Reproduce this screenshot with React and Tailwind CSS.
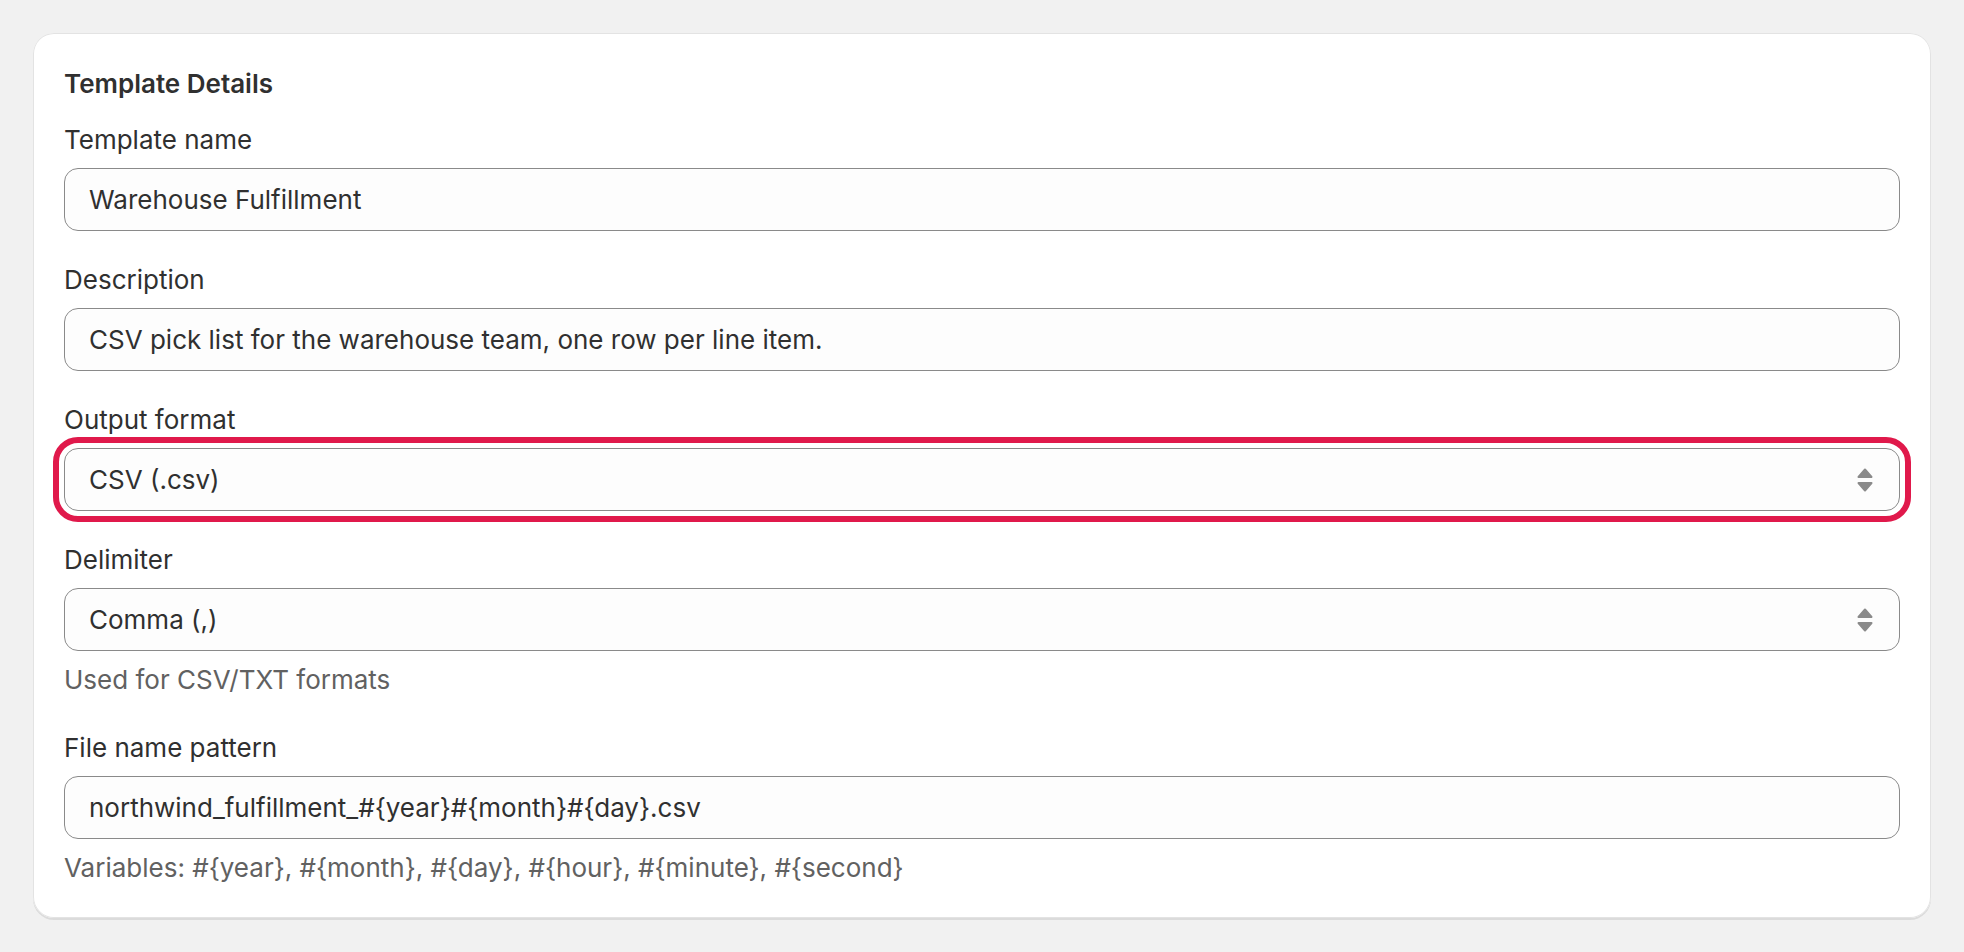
import React from "react";

function SelectArrows() {
  return (
    <svg viewBox="0 0 16 24" className="w-[16px] h-[24px] shrink-0" aria-hidden="true">
      <g fill="#8a8a8a" stroke="#8a8a8a" strokeWidth="2" strokeLinejoin="round">
        <polygon points="8,1.5 14.5,9 1.5,9" />
        <polygon points="1.5,15 14.5,15 8,22.5" />
      </g>
    </svg>
  );
}

function Field({ label, help, children }) {
  return (
    <div className="flex flex-col">
      <label className="leading-[35px] mb-[11px] text-[#303030]">{label}</label>
      {children}
      {help && <div className="mt-[11px] pb-[2px] leading-[35px] text-[#616161]">{help}</div>}
    </div>
  );
}

function TextInput({ value }) {
  return (
    <div className="h-[63px] flex items-center rounded-[14px] border border-[#8a8a8a] bg-[#fdfdfd] px-[24px] leading-[35px] text-[#303030]">
      {value}
    </div>
  );
}

function SelectInput({ value, focused }) {
  return (
    <div
      className={
        "h-[63px] flex items-center justify-between rounded-[14px] border border-[#8a8a8a] bg-[#fdfdfd] pl-[24px] pr-[26px] leading-[35px] text-[#303030]" +
        (focused ? " outline-[6px] outline-solid outline-offset-[5px] outline-[#e0194b]" : "")
      }
    >
      <span>{value}</span>
      <SelectArrows />
    </div>
  );
}

export default function App() {
  return (
    <div
      className="min-h-screen bg-[#f1f1f1] p-[33px] text-[26px]"
      style={{ fontFamily: "Inter, 'Noto Sans', sans-serif" }}
    >
      <div className="rounded-[21px] bg-white p-[31px] shadow-[inset_0_0_0_1px_#e3e3e3,0_2px_0_0_rgba(0,0,0,0.09)]">
        <h2 className="pt-[2px] pb-[21px] leading-[35px] font-semibold text-[#303030]">
          Template Details
        </h2>
        <div className="flex flex-col gap-[31px]">
          <Field label="Template name">
            <TextInput value="Warehouse Fulfillment" />
          </Field>
          <Field label="Description">
            <TextInput value="CSV pick list for the warehouse team, one row per line item." />
          </Field>
          <Field label="Output format">
            <SelectInput value="CSV (.csv)" focused />
          </Field>
          <Field label="Delimiter" help="Used for CSV/TXT formats">
            <SelectInput value="Comma (,)" />
          </Field>
          <Field
            label="File name pattern"
            help="Variables: #{year}, #{month}, #{day}, #{hour}, #{minute}, #{second}"
          >
            <TextInput value="northwind_fulfillment_#{year}#{month}#{day}.csv" />
          </Field>
        </div>
      </div>
    </div>
  );
}
